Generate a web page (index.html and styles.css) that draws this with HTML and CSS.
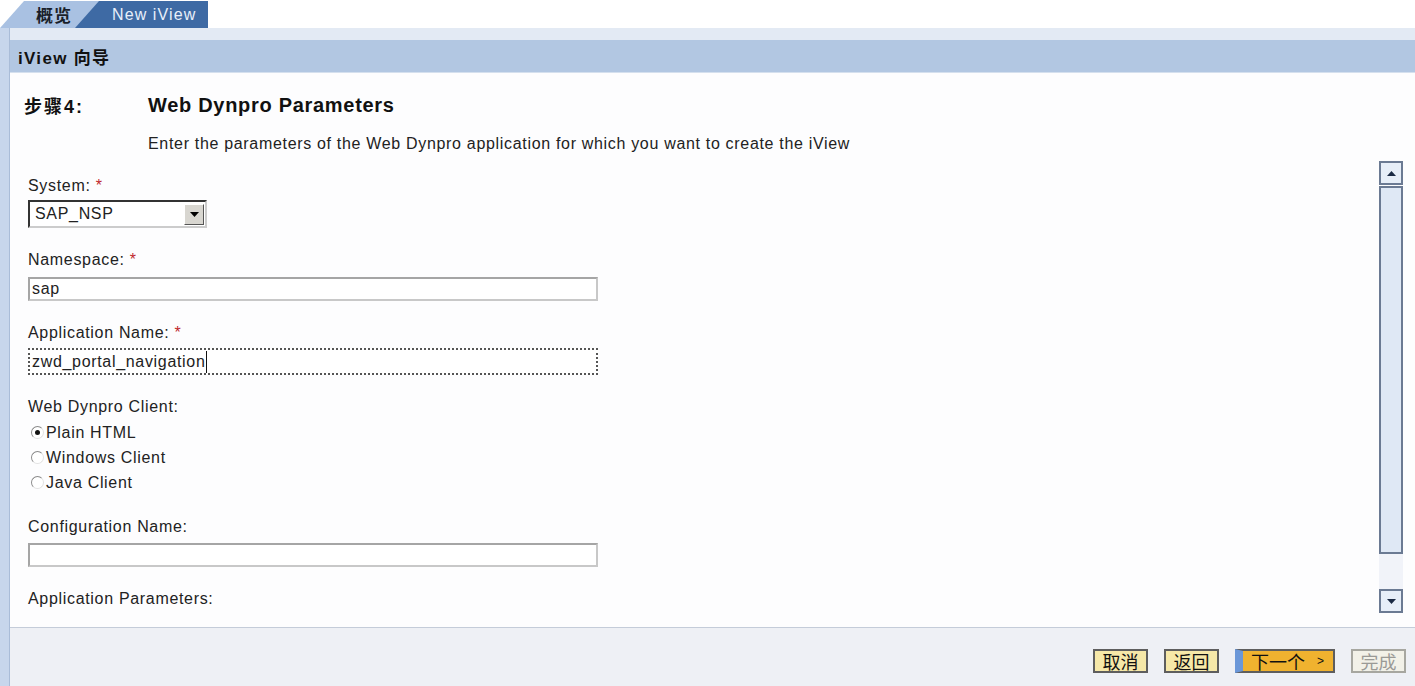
FILE: index.html
```html
<!DOCTYPE html>
<html>
<head>
<meta charset="utf-8">
<link rel="stylesheet" href="styles.css">
</head>
<body>
<div class="tabs">
  <div class="tab tab-overview"><span>概览</span></div>
  <div class="tab tab-active"><span>New iView</span></div>
</div>
<div class="shell">
  <div class="leftbar"></div>
  <div class="main">
    <div class="topband"></div>
    <div class="header">iView 向导</div>
    <div class="panel">
      <div class="step">
        <div class="step-no">步骤4:</div>
        <div class="step-title">Web Dynpro Parameters</div>
      </div>
      <div class="step-desc">Enter the parameters of the Web Dynpro application for which you want to create the iView</div>
      <div class="scrollarea">
        <div class="form">
          <div class="field">
            <div class="label">System: <span class="req">*</span></div>
            <div class="select"><span class="select-val">SAP_NSP</span><span class="select-btn"><svg width="9" height="5" viewBox="0 0 9 5"><path d="M0 0h9L4.5 5z" fill="#000"/></svg></span></div>
          </div>
          <div class="field">
            <div class="label">Namespace: <span class="req">*</span></div>
            <div class="input">sap</div>
          </div>
          <div class="field">
            <div class="label">Application Name: <span class="req">*</span></div>
            <div class="input focus"><span>zwd_portal_navigation</span><span class="caret"></span></div>
          </div>
          <div class="field">
            <div class="label">Web Dynpro Client:</div>
            <div class="radios">
              <div class="radio"><span class="rb on"></span>Plain HTML</div>
              <div class="radio"><span class="rb"></span>Windows Client</div>
              <div class="radio"><span class="rb"></span>Java Client</div>
            </div>
          </div>
          <div class="field">
            <div class="label">Configuration Name:</div>
            <div class="input conf"></div>
          </div>
          <div class="field">
            <div class="label">Application Parameters:</div>
          </div>
        </div>
        <div class="scrollbar">
          <div class="sb-btn"><svg width="9" height="5" viewBox="0 0 9 5"><path d="M0 5h9L4.5 0z" fill="#1b2a44"/></svg></div>
          <div class="sb-thumb"></div>
          <div class="sb-rest"></div>
          <div class="sb-btn"><svg width="9" height="5" viewBox="0 0 9 5"><path d="M0 0h9L4.5 5z" fill="#1b2a44"/></svg></div>
        </div>
      </div>
    </div>
    <div class="footer">
      <div class="btn">取消</div>
      <div class="btn">返回</div>
      <div class="btn primary">下一个 <span class="gt">&gt;</span></div>
      <div class="btn disabled">完成</div>
    </div>
  </div>
</div>
</body>
</html>
```

FILE: styles.css
```css
html, body {
  margin: 0;
  padding: 0;
  background: #ffffff;
  font-family: "Liberation Sans", Arial, "Noto Sans CJK SC", sans-serif;
  color: #222;
}
body {
  width: 1415px;
  height: 686px;
  overflow: hidden;
  display: flex;
  flex-direction: column;
}
.tabs {
  height: 28px;
  display: flex;
  align-items: flex-end;
  padding-left: 0;
}
.tab {
  height: 27px;
  display: flex;
  align-items: center;
  clip-path: polygon(24px 0, 100% 0, 100% 100%, 0 100%);
}
.tab-overview {
  width: 100px;
  background: #a9c1e2;
  color: #1a1f2a;
  padding-left: 36px;
  box-sizing: border-box;
  font-size: 17px;
  font-weight: bold;
  letter-spacing: 1px;
}
.tab-active {
  width: 133px;
  margin-left: -25px;
  background: #3e6aa4;
  color: #e8effa;
  padding-left: 37px;
  box-sizing: border-box;
  font-size: 16px;
  letter-spacing: 1.1px;
}
.shell {
  flex: 1;
  display: flex;
}
.leftbar {
  width: 9px;
  background: #c7d6ec;
  border-right: 1px solid #a9bcd8;
}
.main {
  flex: 1;
  display: flex;
  flex-direction: column;
}
.topband {
  height: 12px;
  background: #e3eaf4;
}
.header {
  height: 32px;
  background: #b2c7e2;
  border-bottom: 1px solid #d5e0ee;
  font-weight: bold;
  font-size: 17px;
  letter-spacing: 1.3px;
  color: #111;
  display: flex;
  align-items: center;
  padding-left: 8px;
}
.panel {
  height: 554px;
  background: #fdfdfe;
  border-bottom: 1px solid #c4ccd9;
  display: flex;
  flex-direction: column;
}
.step {
  display: flex;
  align-items: center;
  height: 22px;
  margin-top: 21px;
  font-weight: bold;
  color: #111;
}
.step-no {
  width: 124px;
  padding-left: 14px;
  font-size: 18px;
  letter-spacing: 2px;
}
.step-title {
  font-size: 20px;
  letter-spacing: 0.7px;
}
.step-desc {
  margin-top: 19px;
  padding-left: 138px;
  font-size: 16px;
  letter-spacing: 0.68px;
  color: #222;
}
.scrollarea {
  flex: 1;
  display: flex;
  margin-top: 5px;
}
.form {
  flex: 1;
  padding-left: 18px;
  padding-top: 18px;
  font-size: 16px;
  letter-spacing: 0.68px;
}
.field {
  margin-bottom: 22px;
}
.label {
  height: 20px;
  line-height: 20px;
  color: #222;
}
.req {
  color: #c0282d;
}
.select {
  margin-top: 4px;
  width: 179px;
  height: 28px;
  box-sizing: border-box;
  border: 2px solid #333;
  border-right-color: #ccc;
  border-bottom-color: #ccc;
  display: flex;
  align-items: center;
  background: #fff;
}
.select-val {
  flex: 1;
  padding-left: 5px;
}
.select-btn {
  width: 20px;
  height: 21px;
  margin-right: 1px;
  background: #d8d6d0;
  border: 1px solid #fff;
  border-right-color: #555;
  border-bottom-color: #555;
  display: flex;
  align-items: center;
  justify-content: center;
  box-sizing: border-box;
}
.input {
  margin-top: 7px;
  width: 570px;
  height: 24px;
  box-sizing: border-box;
  border: 2px solid #a5a5a5;
  border-right-color: #c8c8c8;
  border-bottom-color: #c8c8c8;
  background: #fff;
  padding-left: 2px;
  display: flex;
  align-items: center;
}
.input.focus {
  margin-top: 5px;
  height: 27px;
  border: 2px dotted #555;
}
.input.conf {
  margin-top: 6px;
}
.caret {
  width: 1px;
  height: 22px;
  background: #111;
}
.radios {
  margin-top: 3px;
}
.radio {
  height: 25px;
  display: flex;
  align-items: center;
  padding-left: 3px;
}
.rb {
  width: 13px;
  height: 13px;
  border-radius: 50%;
  border: 1px solid #8a8a8a;
  border-right-color: #e2e2e2;
  border-bottom-color: #e2e2e2;
  box-sizing: border-box;
  margin-right: 2px;
  display: flex;
  align-items: center;
  justify-content: center;
  background: #fff;
}
.rb.on::after {
  content: "";
  width: 5px;
  height: 5px;
  border-radius: 50%;
  background: #111;
}
.scrollbar {
  width: 24px;
  margin-right: 12px;
  margin-top: 3px;
  margin-bottom: 18px;
  display: flex;
  flex-direction: column;
}
.sb-btn {
  height: 24px;
  box-sizing: border-box;
  border: 2px solid #6b7a93;
  background: #e7eef8;
  display: flex;
  align-items: center;
  justify-content: center;
}
.sb-thumb {
  margin-top: 1px;
  height: 368px;
  box-sizing: border-box;
  border: 2px solid #6b7a93;
  background: #dfe8f5;
}
.sb-rest {
  flex: 1;
  background: #f1f3f9;
}
.footer {
  flex: 1;
  background: #eef0f5;
  display: flex;
  justify-content: flex-end;
  align-items: flex-start;
  padding-top: 21px;
  padding-right: 9px;
  gap: 16px;
}
.btn {
  width: 55px;
  height: 24px;
  box-sizing: border-box;
  border: 2px solid #5e5e5e;
  background: #f6e8a8;
  font-size: 18px;
  display: flex;
  align-items: center;
  justify-content: center;
  color: #111;
}
.btn.primary {
  background: #f0b22f;
  border-left: 8px solid #6b97d8;
  width: 100px;
  justify-content: flex-start;
  padding-left: 8px;
}
.gt {
  font-size: 12px;
  margin-left: 12px;
}
.btn.disabled {
  background: #f2f1e8;
  border-color: #a7a7a0;
  color: #9a9a96;
}
```
